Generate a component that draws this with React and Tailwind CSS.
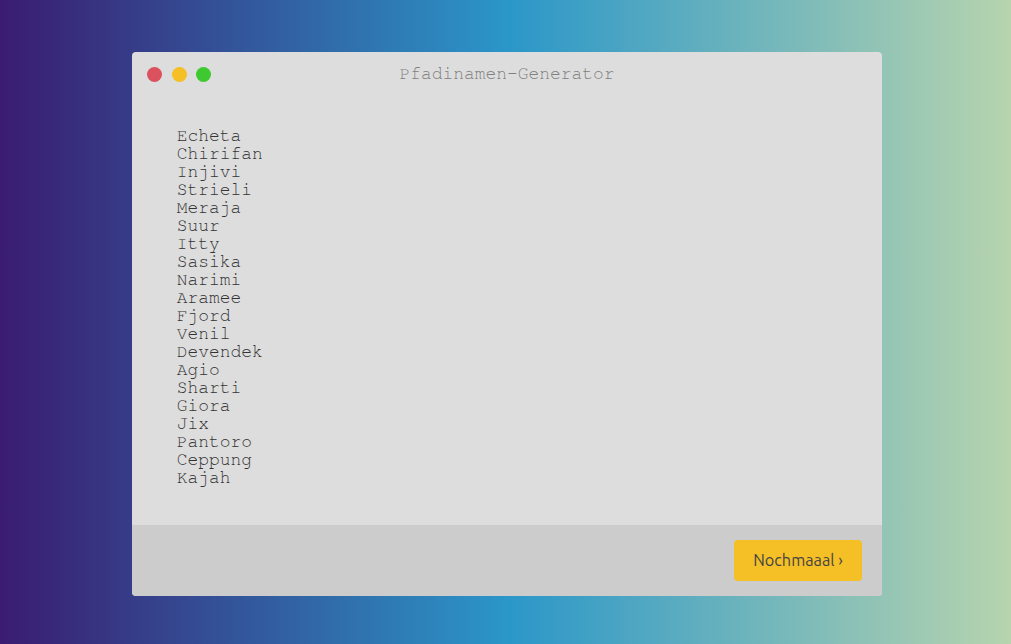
const names = [
  "Echeta", "Chirifan", "Injivi", "Strieli", "Meraja", "Suur", "Itty",
  "Sasika", "Narimi", "Aramee", "Fjord", "Venil", "Devendek", "Agio",
  "Sharti", "Giora", "Jix", "Pantoro", "Ceppung", "Kajah",
];

function TitleBar() {
  return (
    <header className="grid h-[45px] shrink-0 grid-cols-[1fr_auto_1fr] items-center px-[15px]">
      <div className="flex gap-[9.7px]">
        <span className="size-[15px] rounded-full bg-[#db525e]" />
        <span className="size-[15px] rounded-full bg-[#f5bf26]" />
        <span className="size-[15px] rounded-full bg-[#3fc930]" />
      </div>
      <h1 className="pb-[2px] text-[17.95px] leading-[18px] text-[#808080]">Pfadinamen-Generator</h1>
    </header>
  );
}

export default function App() {
  return (
    <main className="h-screen bg-[linear-gradient(90deg,#3a1c71_0%,#2b97c9_50.5%,#b7d4ae_100%)] pt-[52px] pl-[132px] font-['FreeMono','Nimbus_Mono_PS','Courier_Prime','Courier_10_Pitch','Courier','Courier_New','Liberation_Mono',monospace]">
      <section className="flex h-[544px] w-[750px] flex-col overflow-hidden rounded-[4px] bg-[#ddd]">
        <TitleBar />
        <ul className="flex-1 pt-[30px] pl-[44.7px] text-[17.95px] leading-[18px] text-[#333]">
          {names.map((name) => (
            <li key={name}>{name}</li>
          ))}
        </ul>
        <footer className="flex h-[71px] items-center justify-end bg-[#ccc] px-5">
          <button className="h-[41px] w-[128px] rounded-[4px] bg-[#f5bf26] font-['Ubuntu','Noto_Sans',sans-serif] text-[16.3px] text-[#444]">
            Nochmaaal ›
          </button>
        </footer>
      </section>
    </main>
  );
}
